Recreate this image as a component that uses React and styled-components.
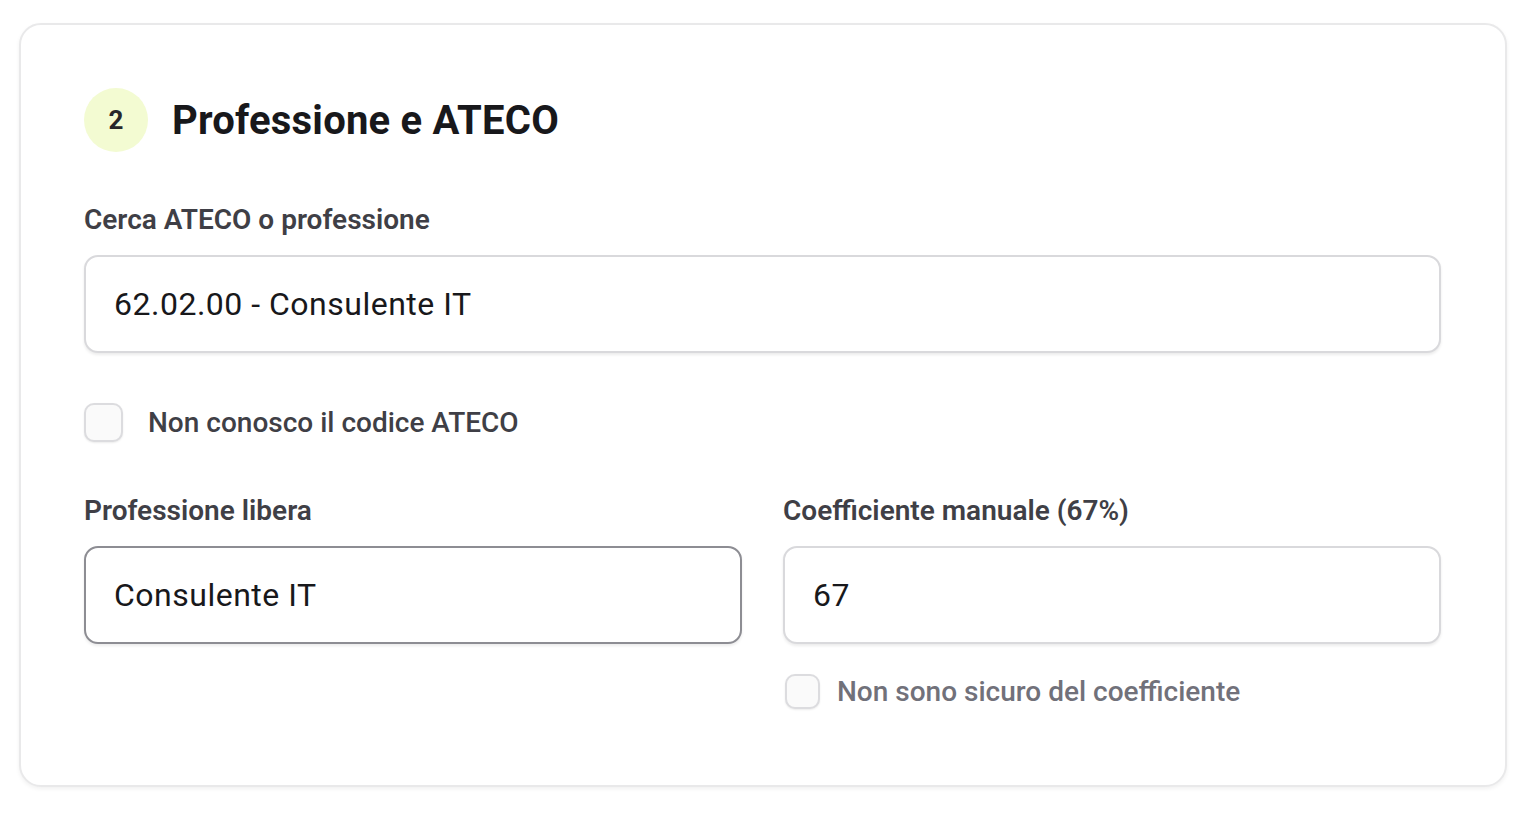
import React from "react";
import styled, { createGlobalStyle } from "styled-components";

const Global = createGlobalStyle`
  html, body { margin: 0; padding: 0; background: #ffffff; }
  body { font-family: Roboto, "Liberation Sans", sans-serif; -webkit-font-smoothing: antialiased; }
  * { box-sizing: border-box; }
`;

const Page = styled.div`
  padding: 23px 29px 28px 19px;
`;

const Card = styled.section`
  width: 1488px;
  border: 2px solid #e9e9ea;
  border-radius: 22px;
  background: #fff;
  box-shadow: 0 2px 4px rgba(0, 0, 0, 0.06);
  padding: 63px 64px 76px 63px;
  display: flex;
  flex-direction: column;
`;

const Header = styled.div`
  display: flex;
  align-items: center;
  gap: 24px;
  margin-bottom: 50px;
`;

const Badge = styled.div`
  width: 64px;
  height: 64px;
  border-radius: 50%;
  background: #f3fbd2;
  display: flex;
  align-items: center;
  justify-content: center;
  font-size: 26px;
  font-weight: 700;
  color: #27272a;
`;

const Title = styled.h2`
  margin: 0;
  font-size: 40px;
  font-weight: 700;
  color: #18181b;
  letter-spacing: 0.2px;
`;

const Field = styled.div`
  display: flex;
  flex-direction: column;
  gap: 17px;
  min-width: 0;
`;

const Label = styled.label`
  font-size: 28px;
  line-height: 36px;
  font-weight: 600;
  color: #3f3f46;
`;

const Input = styled.input`
  width: 100%;
  height: 98px;
  border: 2px solid ${(p) => (p.$active ? "#8d8d93" : "#d9d9dc")};
  border-radius: 14px;
  background: #fff;
  box-shadow: 0 2px 3px rgba(0, 0, 0, 0.08);
  padding: 0 28px;
  font-family: inherit;
  font-size: 32px;
  letter-spacing: 0.5px;
  color: #18181b;
  outline: none;
`;

const CheckRow = styled.label`
  display: flex;
  align-items: center;
  gap: ${(p) => (p.$small ? "17px" : "25px")};
  margin-top: ${(p) => p.$mt || 0}px;
  padding-left: ${(p) => (p.$small ? "2px" : "0")};
  font-size: 28px;
  color: ${(p) => (p.$muted ? "#71717a" : "#3f3f46")};
  font-weight: 500;
`;

const Box = styled.span`
  width: ${(p) => (p.$small ? "35px" : "39px")};
  height: ${(p) => (p.$small ? "35px" : "39px")};
  border: 2px solid #dcdcdf;
  border-radius: 10px;
  background: #fafafa;
  box-shadow: 0 1px 2px rgba(0, 0, 0, 0.08);
  flex-shrink: 0;
`;

const Grid = styled.div`
  display: grid;
  grid-template-columns: 1fr 1fr;
  column-gap: 41px;
  margin-top: 51px;
`;

const RightCol = styled.div`
  display: flex;
  flex-direction: column;
`;

export default function App() {
  return (
    <>
      <Global />
      <Page>
        <Card>
          <Header>
            <Badge>2</Badge>
            <Title>Professione e ATECO</Title>
          </Header>
          <Field>
            <Label>Cerca ATECO o professione</Label>
            <Input readOnly value="62.02.00 - Consulente IT" />
          </Field>
          <CheckRow $mt={50}>
            <Box />
            Non conosco il codice ATECO
          </CheckRow>
          <Grid>
            <Field>
              <Label>Professione libera</Label>
              <Input $active readOnly value="Consulente IT" />
            </Field>
            <RightCol>
              <Field>
                <Label>Coefficiente manuale (67%)</Label>
                <Input readOnly value="67" />
              </Field>
              <CheckRow $small $muted $mt={30}>
                <Box $small />
                Non sono sicuro del coefficiente
              </CheckRow>
            </RightCol>
          </Grid>
        </Card>
      </Page>
    </>
  );
}
